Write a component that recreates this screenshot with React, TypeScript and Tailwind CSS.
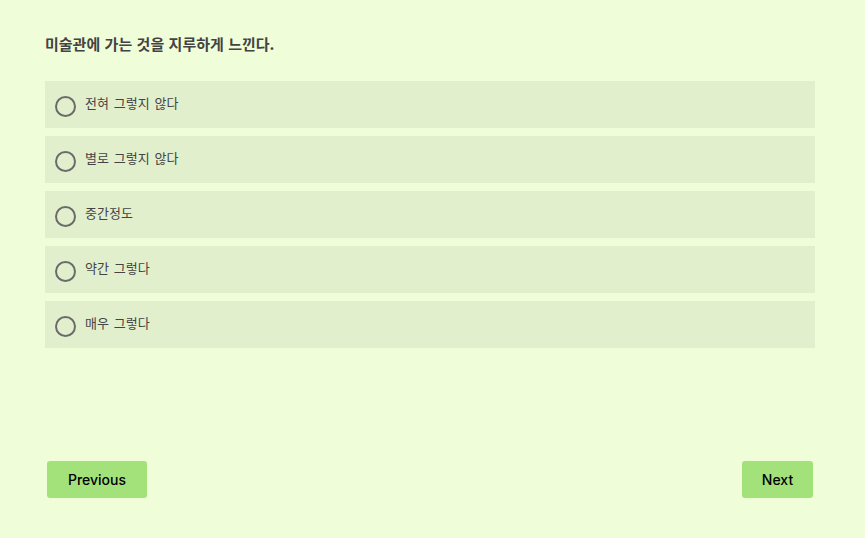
import React, { useState } from 'react';

const OPTIONS = ['전혀 그렇지 않다', '별로 그렇지 않다', '중간정도', '약간 그렇다', '매우 그렇다'];

const App: React.FC = () => {
  const [selected, setSelected] = useState<number | null>(null);

  return (
    <div className="min-h-screen w-full bg-[#f0fdd9] px-[45px] pt-[33px] font-['Noto_Sans_CJK_KR','Noto_Sans',sans-serif] text-[#444]">
      <h1 className="text-[15px] font-bold leading-[22px] text-[#434343] [word-spacing:1px]">
        미술관에 가는 것을 지루하게 느낀다.
      </h1>

      <div className="mt-[26px] flex w-[770px] flex-col gap-[8px]">
        {OPTIONS.map((label, i) => (
          <label
            key={label}
            onClick={() => setSelected(i)}
            className="flex h-[47px] cursor-pointer items-center bg-[#e2efcd] pl-[10px]"
          >
            <span className="mt-[3px] flex h-[21px] w-[21px] items-center justify-center rounded-full border-2 border-[#6b6b6b]">
              {selected === i && <span className="h-[10px] w-[10px] rounded-full bg-[#6b6b6b]" />}
            </span>
            <span className="mb-[3px] ml-[9px] text-[13px] leading-[18px] text-[#444] [word-spacing:2px]">{label}</span>
          </label>
        ))}
      </div>

      <div className="mt-[113px] flex w-[770px] justify-between px-[2px]">
        <button className="h-[37px] w-[100px] rounded-[3px] bg-[#a3e27a] font-['Inter',sans-serif] text-[14px] font-medium text-black">
          Previous
        </button>
        <button className="h-[37px] w-[71px] rounded-[3px] bg-[#a3e27a] font-['Inter',sans-serif] text-[14px] font-medium text-black">
          Next
        </button>
      </div>
    </div>
  );
};

export default App;
